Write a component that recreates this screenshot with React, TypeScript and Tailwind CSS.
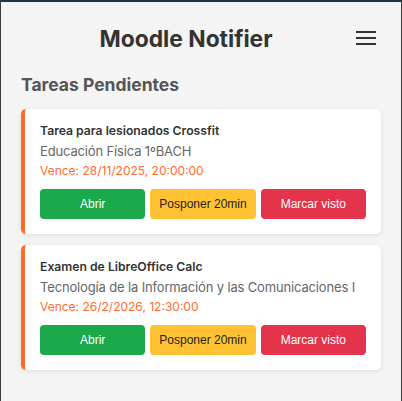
import React from 'react';

type Task = {
  title: string;
  course: string;
  due: string;
};

const tasks: Task[] = [
  {
    title: 'Tarea para lesionados Crossfit',
    course: 'Educación Física 1ºBACH',
    due: 'Vence: 28/11/2025, 20:00:00',
  },
  {
    title: 'Examen de LibreOffice Calc',
    course: 'Tecnología de la Información y las Comunicaciones I',
    due: 'Vence: 26/2/2026, 12:30:00',
  },
];

function TaskCard({ task }: { task: Task }) {
  return (
    <div className="rounded-[5px] border-l-4 border-[#ff6b2b] bg-white pt-[12px] pr-[15px] pb-[15px] pl-[15px] shadow-[0_1px_4px_rgba(0,0,0,0.1)]">
      <h3 className="text-[12.2px] leading-[20px] font-semibold text-[#333]">{task.title}</h3>
      <p className="text-[13px] leading-[20px] tracking-[-0.15px] text-[#666]">{task.course}</p>
      <p className="text-[12px] leading-[20px] text-[#ff6b2b]">{task.due}</p>
      <div className="mt-[8px] grid grid-cols-3 gap-[5px] font-['Liberation_Sans',Arial,sans-serif] text-[12px]">
        <button className="h-[30px] rounded-[4px] bg-[#1ba84b] text-white">Abrir</button>
        <button className="h-[30px] rounded-[4px] bg-[#ffc233] text-[#222]">Posponer 20min</button>
        <button className="h-[30px] rounded-[4px] bg-[#e3344b] text-white">Marcar visto</button>
      </div>
    </div>
  );
}

export default function App() {
  return (
    <div className="h-[401px] w-[402px] overflow-hidden border-t-2 border-x border-t-[#1d3640] border-x-[#3c3c3c] bg-[#f4f4f4] font-['Inter',sans-serif]">
      <header className="flex items-center px-5 pt-[22px]">
        <h1 className="flex-1 text-center text-[22.8px] leading-[30px] font-bold text-[#333]">Moodle Notifier</h1>
        <button className="-mt-[2px] flex w-[30px] flex-col items-end gap-[4px] py-1 pr-[5px]" aria-label="Menú">
          <span className="h-[2px] w-5 bg-[#333]" />
          <span className="h-[2px] w-5 bg-[#333]" />
          <span className="h-[2px] w-5 bg-[#333]" />
        </button>
      </header>
      <main className="px-5 pt-[19px]">
        <h2 className="text-[17.5px] leading-[24px] font-bold text-[#555]">Tareas Pendientes</h2>
        <div className="mt-[12px] flex flex-col gap-[11px]">
          {tasks.map((task) => (
            <TaskCard key={task.title} task={task} />
          ))}
        </div>
      </main>
    </div>
  );
}
